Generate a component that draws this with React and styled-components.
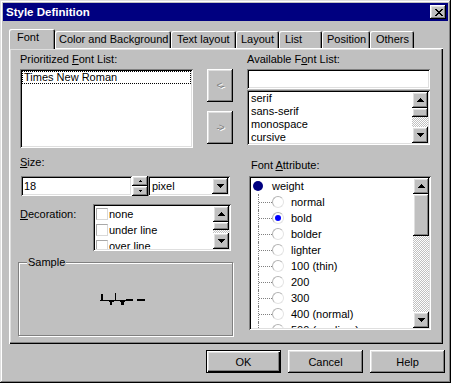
import React from 'react';
import styled, { createGlobalStyle, css } from 'styled-components';

const GlobalStyle = createGlobalStyle`
  html, body {
    margin: 0;
    padding: 0;
    background: #c0c0c0;
  }
  body {
    font-family: "Liberation Sans", Arial, sans-serif;
    font-size: 11px;
    color: #000;
  }
  * { box-sizing: border-box; }
`;

// bevel helpers
const raised = css`
  background: #c0c0c0;
  box-shadow: inset -1px -1px #000, inset 1px 1px #fff, inset -2px -2px #808080, inset 2px 2px #dfdfdf;
`;

const sunken = css`
  background: #fff;
  box-shadow: inset 1px 1px #808080, inset -1px -1px #fff, inset 2px 2px #000, inset -2px -2px #dfdfdf;
  padding: 2px;
`;

const checker = css`
  background-color: #c0c0c0;
  background-image: conic-gradient(#fff 25%, #c0c0c0 0 50%, #fff 0 75%, #c0c0c0 0);
  background-size: 2px 2px;
`;

const Window = styled.div`
  width: 451px;
  height: 383px;
  padding: 3px;
  display: flex;
  flex-direction: column;
  background: #c0c0c0;
  box-shadow: inset -1px -1px #000, inset 1px 1px #dfdfdf, inset -2px -2px #808080, inset 2px 2px #fff;
`;

const TitleBar = styled.div`
  height: 18px;
  background: #000080;
  display: flex;
  align-items: center;
  justify-content: space-between;
  padding: 0 2px 0 3px;
`;

const TitleText = styled.span`
  color: #fff;
  font-weight: bold;
  font-size: 11.5px;
`;

const CloseButton = styled.div`
  ${raised};
  width: 16px;
  height: 14px;
  display: flex;
  align-items: center;
  justify-content: center;
  padding-left: 1px;
`;

const Body = styled.div`
  flex: 1;
  display: flex;
  flex-direction: column;
  padding: 8px 0 0 6px;
`;

const TabRow = styled.div`
  display: flex;
  align-items: flex-end;
  height: 19px;
`;

const Tab = styled.div`
  position: relative;
  width: ${p => p.$w}px;
  padding-left: ${p => p.$pad}px;
  height: ${p => (p.$active ? 20 : 17)}px;
  margin-bottom: ${p => (p.$active ? -1 : 0)}px;
  z-index: ${p => (p.$active ? 1 : 0)};
  padding-top: 2px;
  line-height: 13px;
  white-space: nowrap;
  background: #c0c0c0;
  border-radius: 2px 2px 0 0;
  box-shadow: inset 1px 1px #fff, inset -1px 0 #000, inset -2px 0 #808080;
`;

const Panel = styled.div`
  width: 434px;
  height: 296px;
  padding: 5px 0 0 9px;
  display: grid;
  grid-template-columns: 215px 184px;
  column-gap: 14px;
  align-content: start;
  box-shadow: inset 1px 1px #fff, inset -1px -1px #000, inset -2px -2px #808080, inset 2px 2px #dfdfdf;
`;

const Column = styled.div`
  display: flex;
  flex-direction: column;
`;

const Label = styled.div`
  height: 13px;
  line-height: 13px;
  white-space: nowrap;
  margin-left: ${p => p.$left || 0}px;
  margin-top: ${p => p.$top || 0}px;
  width: ${p => (p.$w ? `${p.$w}px` : 'auto')};
  flex: none;
`;

const TopRow = styled.div`
  display: flex;
  margin-top: 3px;
`;

const ListBox = styled.div`
  ${sunken};
  width: ${p => p.$w}px;
  height: ${p => p.$h}px;
  margin-left: ${p => p.$left || 0}px;
  margin-top: ${p => p.$top || 0}px;
  display: flex;
  flex: none;
`;

const ListItems = styled.div`
  flex: 1;
  overflow: hidden;
`;

const FocusItem = styled.div`
  height: 13px;
  line-height: 11px;
  padding: 0 1px;
  border: 1px dotted #000;
  white-space: nowrap;
`;

const ListItem = styled.div`
  height: 13px;
  line-height: 13px;
  padding-left: 2px;
  white-space: nowrap;
`;

const ArrowColumn = styled.div`
  display: flex;
  flex-direction: column;
  gap: 9px;
  margin-left: 14px;
`;

const MoveButton = styled.div`
  ${raised};
  width: 26px;
  height: 33px;
  display: flex;
  align-items: center;
  justify-content: center;
  color: #808080;
  text-shadow: 1px 1px #fff;
  font-size: 10px;
  letter-spacing: -1px;
`;

const TextField = styled.div`
  ${sunken};
  height: 20px;
  width: ${p => p.$w}px;
  margin-top: ${p => p.$top || 0}px;
  line-height: 16px;
  padding-left: 3px;
  flex: none;
`;

const SizeRow = styled.div`
  display: flex;
  margin: 7px 0 0 3px;
  height: 20px;
`;

const Spinner = styled.div`
  display: flex;
  flex-direction: column;
  width: 16px;
`;

const SpinButton = styled.div`
  ${raised};
  height: 10px;
  display: flex;
  align-items: center;
  justify-content: center;
`;

const Select = styled.div`
  ${sunken};
  width: 82px;
  display: flex;
  align-items: center;
  justify-content: space-between;
  padding-left: 4px;
  line-height: 16px;
`;

const ScrollButton = styled.div`
  ${raised};
  width: 16px;
  height: 16px;
  flex: none;
  display: flex;
  align-items: center;
  justify-content: center;
`;

const ScrollTrack = styled.div`
  width: 16px;
  display: flex;
  flex-direction: column;
  flex: none;
`;

const Thumb = styled.div`
  ${raised};
  height: ${p => p.$h}px;
  flex: none;
`;

const TrackFill = styled.div`
  ${checker};
  flex: 1;
`;

const DecorationRow = styled.div`
  display: flex;
  margin: 8px 0 0 2px;
`;

const CheckRow = styled.div`
  display: flex;
  align-items: center;
  height: 16px;
  white-space: nowrap;
`;

const CheckBox = styled.span`
  width: 12px;
  height: 12px;
  flex: none;
  margin: 0 1px 0 1px;
  background: #fff;
  border: 1px solid;
  border-color: #a8a8a8 #d8d8d8 #d8d8d8 #a8a8a8;
`;

const GroupBox = styled.div`
  position: relative;
  margin-top: 11px;
  width: 215px;
  height: 74px;
  border: 1px solid #808080;
  box-shadow: inset 1px 1px #fff, 1px 1px #fff;
  display: flex;
  align-items: center;
  justify-content: center;
  padding: 0 5px 0 0;
`;

const GroupLegend = styled.span`
  position: absolute;
  top: -7px;
  left: 8px;
  padding: 0 1px;
  line-height: 13px;
  background: #c0c0c0;
`;

const TreeBox = styled(ListBox)`
  margin-top: 4px;
`;

const TreeRow = styled.div`
  display: flex;
  align-items: center;
  height: 16px;
  white-space: nowrap;
`;

const RootDot = styled.span`
  width: 10px;
  height: 10px;
  flex: none;
  border-radius: 50%;
  background: #000080;
  margin: 0 9px 0 2px;
`;

const Connector = styled.span`
  position: relative;
  flex: none;
  width: 14px;
  height: 16px;
  margin-left: 7px;
  border-left: 1px dotted #808080;
  &::after {
    content: '';
    position: absolute;
    left: 0;
    right: 0;
    top: 8px;
    border-top: 1px dotted #808080;
  }
`;

const Radio = styled.span`
  width: 12px;
  height: 12px;
  flex: none;
  border-radius: 50%;
  border: 1px solid;
  border-color: #b4b4b4 #e4e4e4 #e4e4e4 #b4b4b4;
  background: #fff;
  margin-right: 7px;
  display: flex;
  align-items: center;
  justify-content: center;
  ${p => p.$checked && css`
    &::after {
      content: '';
      width: 6px;
      height: 6px;
      border-radius: 50%;
      background: #0000ff;
    }
  `}
`;

const ButtonRow = styled.div`
  display: flex;
  justify-content: flex-end;
  gap: 7px;
  margin-top: 6px;
  padding-right: 3px;
`;

const DialogButton = styled.div`
  ${raised};
  width: 75px;
  height: 23px;
  display: flex;
  align-items: center;
  justify-content: center;
  ${p => p.$default && css`
    box-shadow: inset 1px 1px #000, inset -1px -1px #000, inset 2px 2px #fff, inset -2px -2px #000,
      inset -3px -3px #808080, inset 3px 3px #dfdfdf;
  `}
`;

const Arrow = ({ dir }) => (
  <svg width="7" height="4" viewBox="0 0 7 4">
    {dir === 'up'
      ? <path d="M3 0h1v1h1v1h1v1h1v1H0V3h1V2h1V1h1z" fill="#000" />
      : <path d="M0 0h7v1H6v1H5v1H4v1H3V3H2V2H1V1H0z" fill="#000" />}
  </svg>
);

const TinyArrow = ({ dir }) => (
  <svg width="3" height="2" viewBox="0 0 3 2">
    {dir === 'up'
      ? <path d="M1 0h1v1h1v1H0V1h1z" fill="#000" />
      : <path d="M0 0h3v1H2v1H1V1H0z" fill="#000" />}
  </svg>
);

const CloseGlyph = () => (
  <svg width="8" height="7" viewBox="0 0 8 7" shapeRendering="crispEdges">
    <path d="M0 0h2v1h1v1h2V1h1V0h2v1H7v1H6v1H5v1h1v1h1v1h1v1H6V6H5V5H3v1H2v1H0V6h1V5h1V4h1V3H2V2H1V1H0z" fill="#000" />
  </svg>
);

const SampleGlyphs = () => (
  <svg width="46" height="13" viewBox="0 0 46 13" shapeRendering="crispEdges">
    <g fill="#000">
      <rect x="1" y="1" width="2" height="7" />
      <rect x="0" y="7" width="33" height="1" />
      <rect x="9" y="8" width="5" height="1" />
      <rect x="10" y="8" width="2" height="4" />
      <rect x="15" y="0" width="1" height="8" />
      <rect x="20" y="8" width="5" height="1" />
      <rect x="21" y="8" width="3" height="4" />
      <rect x="26" y="6" width="7" height="2" />
      <rect x="37" y="6" width="8" height="2" />
    </g>
  </svg>
);

const ScrollBar = ({ thumb }) => (
  <ScrollTrack>
    <ScrollButton><Arrow dir="up" /></ScrollButton>
    <Thumb $h={thumb} />
    <TrackFill />
    <ScrollButton><Arrow dir="down" /></ScrollButton>
  </ScrollTrack>
);

const tabs = [
  { label: 'Font', w: 46, pad: 8, active: true },
  { label: 'Color and Background', w: 116, pad: 4 },
  { label: 'Text layout', w: 65, pad: 6 },
  { label: 'Layout', w: 43, pad: 5 },
  { label: 'List', w: 43, pad: 6 },
  { label: 'Position', w: 48, pad: 5 },
  { label: 'Others', w: 44, pad: 6 },
];

const availableFonts = ['serif', 'sans-serif', 'monospace', 'cursive'];
const decorations = ['none', 'under line', 'over line'];
const weights = ['normal', 'bold', 'bolder', 'lighter', '100 (thin)', '200', '300', '400 (normal)', '500 (medium)'];

export default function App() {
  return (
    <>
      <GlobalStyle />
      <Window>
        <TitleBar>
          <TitleText>Style Definition</TitleText>
          <CloseButton><CloseGlyph /></CloseButton>
        </TitleBar>

        <Body>
          <TabRow>
            {tabs.map(t => (
              <Tab key={t.label} $w={t.w} $pad={t.pad} $active={t.active}>{t.label}</Tab>
            ))}
          </TabRow>

          <Panel>
            <Column>
              <Label $left={2}>Prioritized <u>F</u>ont List:</Label>
              <TopRow>
                <ListBox $w={173} $h={79} $left={2}>
                  <ListItems>
                    <FocusItem>Times New Roman</FocusItem>
                  </ListItems>
                </ListBox>
                <ArrowColumn>
                  <MoveButton>&lt;-</MoveButton>
                  <MoveButton>-&gt;</MoveButton>
                </ArrowColumn>
              </TopRow>

              <Label $left={2} $top={8}><u>S</u>ize:</Label>
              <SizeRow>
                <TextField $w={111}>18</TextField>
                <Spinner>
                  <SpinButton><TinyArrow dir="up" /></SpinButton>
                  <SpinButton><TinyArrow dir="down" /></SpinButton>
                </Spinner>
                <Select>
                  <span>pixel</span>
                  <ScrollButton><Arrow dir="down" /></ScrollButton>
                </Select>
              </SizeRow>

              <DecorationRow>
                <Label $w={73} $top={4}><u>D</u>ecoration:</Label>
                <ListBox $w={138} $h={47}>
                  <ListItems>
                    {decorations.map(d => (
                      <CheckRow key={d}><CheckBox />{d}</CheckRow>
                    ))}
                  </ListItems>
                  <ScrollBar thumb={8} />
                </ListBox>
              </DecorationRow>

              <GroupBox>
                <GroupLegend>Sample</GroupLegend>
                <SampleGlyphs />
              </GroupBox>
            </Column>

            <Column>
              <Label>Available F<u>o</u>nt List:</Label>
              <TextField $w={183} $top={3} />
              <ListBox $w={183} $h={55} $top={1}>
                <ListItems>
                  {availableFonts.map(f => <ListItem key={f}>{f}</ListItem>)}
                </ListItems>
                <ScrollBar thumb={9} />
              </ListBox>

              <Label $left={4} $top={14}>Font <u>A</u>ttribute:</Label>
              <TreeBox $w={182} $h={154} $left={2}>
                <ListItems>
                  <TreeRow><RootDot />weight</TreeRow>
                  {weights.map(w => (
                    <TreeRow key={w}>
                      <Connector />
                      <Radio $checked={w === 'bold'} />
                      {w}
                    </TreeRow>
                  ))}
                </ListItems>
                <ScrollBar thumb={42} />
              </TreeBox>
            </Column>
          </Panel>

          <ButtonRow>
            <DialogButton $default>OK</DialogButton>
            <DialogButton>Cancel</DialogButton>
            <DialogButton>Help</DialogButton>
          </ButtonRow>
        </Body>
      </Window>
    </>
  );
}
